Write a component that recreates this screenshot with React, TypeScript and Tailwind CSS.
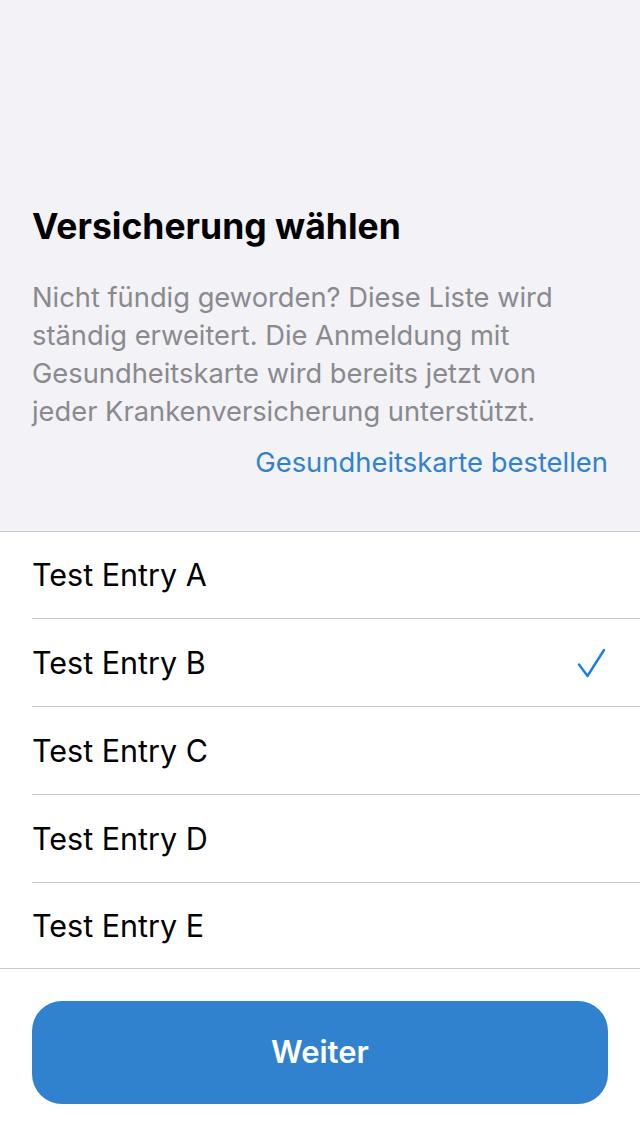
const entries = ["Test Entry A", "Test Entry B", "Test Entry C", "Test Entry D", "Test Entry E"];

function Checkmark() {
  return (
    <svg width="30" height="30" viewBox="0 0 30 30" fill="none" className="mr-[2px]">
      <path d="M3 16.5 L11.5 28 L28 2" stroke="#1a7cf5" strokeWidth="2.4" strokeLinecap="round" strokeLinejoin="round" />
    </svg>
  );
}

export default function App() {
  const selected = 1;
  const last = entries.length - 1;

  return (
    <main className="flex min-h-[1136px] w-[640px] flex-col bg-white font-['Inter','Liberation_Sans',sans-serif]">
      {/* Kopfbereich */}
      <div className="bg-[#f2f2f7] px-8 pt-[204px] pb-[52px]">
        <h1 className="text-[35.5px] leading-[45px] font-bold text-black">Versicherung wählen</h1>
        <p className="mt-[30px] text-[27.3px] leading-[38px] text-[#8a8a8e]">
          Nicht fündig geworden? Diese Liste wird ständig erweitert. Die Anmeldung mit Gesundheitskarte wird bereits jetzt von jeder Krankenversicherung unterstützt.
        </p>
        <div className="mt-[14px] flex justify-end">
          <a className="text-[27.4px] leading-[34px] text-[#3182ce]">Gesundheitskarte bestellen</a>
        </div>
      </div>

      {/* Liste */}
      <ul className="border-t border-[#c8c7cc]">
        {entries.map((entry, i) => (
          <li key={entry} className={i === last ? "border-b border-[#c8c7cc]" : ""}>
            <div
              className={
                "ml-8 flex items-center justify-between pr-8 " +
                (i === 0 ? "h-[87px] border-b border-[#c8c7cc]" : i === last ? "h-[85px]" : "h-[88px] border-b border-[#c8c7cc]")
              }
            >
              <span className="text-[30.5px] text-black">{entry}</span>
              {i === selected && <Checkmark />}
            </div>
          </li>
        ))}
      </ul>

      {/* Button */}
      <div className="px-8 pt-[32px]">
        <button className="flex h-[103px] w-full items-center justify-center rounded-[30px] bg-[#3182ce] text-[31px] font-semibold text-white">
          Weiter
        </button>
      </div>
    </main>
  );
}
